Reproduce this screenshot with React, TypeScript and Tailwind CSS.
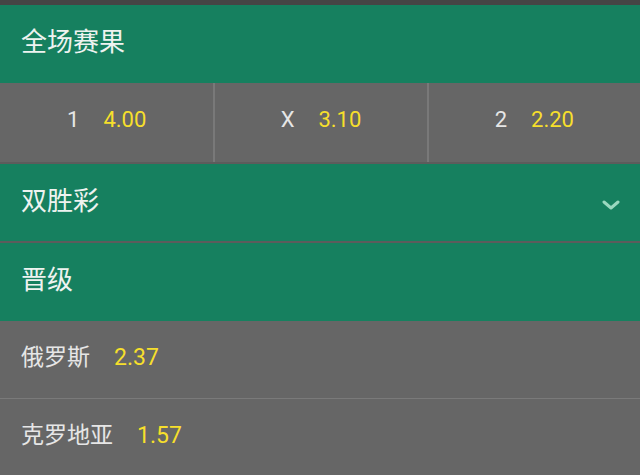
const cjk = "font-['Roboto','Noto_Sans_CJK_SC',sans-serif]";

function GreenHeader({ title, chevron }: { title: string; chevron?: boolean }) {
  return (
    <div className="flex h-[78px] items-center justify-between bg-[#16805f] pl-[21px] pr-[20px]">
      <span className="pb-[4px] text-[26px] leading-none text-[#eef3f0]">{title}</span>
      {chevron && (
        <svg width="18" height="12" viewBox="0 0 18 12" className="mt-[4px]">
          <polyline
            points="2,3 9,9 16,3"
            fill="none"
            stroke="#9ad8bf"
            strokeWidth="3"
            strokeLinecap="round"
            strokeLinejoin="round"
          />
        </svg>
      )}
    </div>
  );
}

const odds = [
  { label: "1", value: "4.00" },
  { label: "X", value: "3.10" },
  { label: "2", value: "2.20" },
];

const outrights = [
  { team: "俄罗斯", value: "2.37" },
  { team: "克罗地亚", value: "1.57" },
];

export default function App() {
  return (
    <div className={`flex h-[475px] w-[640px] flex-col overflow-hidden bg-[#5c5c5c] ${cjk}`}>
      <div className="h-[5px] shrink-0 bg-[#454545]" />
      <GreenHeader title="全场赛果" />
      <div className="grid h-[79px] shrink-0 grid-cols-3 bg-[#666666]">
        {odds.map((o, i) => (
          <div
            key={o.label}
            className={`flex items-center justify-center gap-[24px] pb-[4px] text-[22px] leading-none ${
              i > 0 ? "border-l-2 border-[#797979]" : ""
            }`}
          >
            <span className="text-[#e6e6e6]">{o.label}</span>
            <span className="text-[#f6df2c]">{o.value}</span>
          </div>
        ))}
      </div>
      <div className="h-[2px] shrink-0" />
      <GreenHeader title="双胜彩" chevron />
      <div className="h-[2px] shrink-0" />
      <GreenHeader title="晋级" />
      <div className="flex flex-1 flex-col bg-[#666666]">
        {outrights.map((r, i) => (
          <div
            key={r.team}
            className={`flex h-[77px] shrink-0 items-center gap-[24px] pl-[21px] pb-[4px] text-[23px] leading-none ${
              i > 0 ? "border-t border-[#7a7a7a]" : ""
            }`}
          >
            <span className="text-[#e6e6e6]">{r.team}</span>
            <span className="text-[#f6df2c]">{r.value}</span>
          </div>
        ))}
      </div>
    </div>
  );
}
